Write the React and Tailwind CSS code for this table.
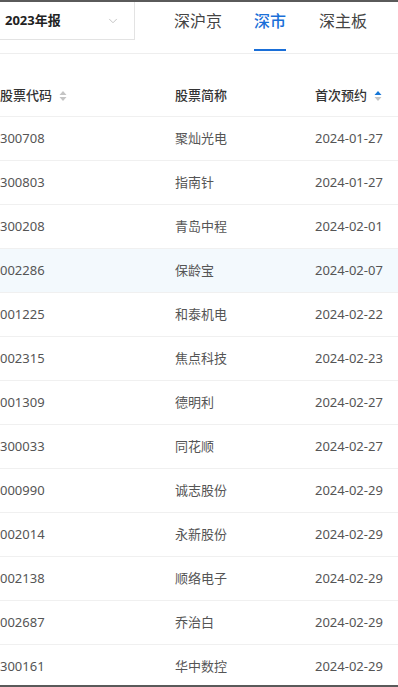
import { ChevronDown } from "lucide-react";

const rows = [
  ["300708", "聚灿光电", "2024-01-27"],
  ["300803", "指南针", "2024-01-27"],
  ["300208", "青岛中程", "2024-02-01"],
  ["002286", "保龄宝", "2024-02-07"],
  ["001225", "和泰机电", "2024-02-22"],
  ["002315", "焦点科技", "2024-02-23"],
  ["001309", "德明利", "2024-02-27"],
  ["300033", "同花顺", "2024-02-27"],
  ["000990", "诚志股份", "2024-02-29"],
  ["002014", "永新股份", "2024-02-29"],
  ["002138", "顺络电子", "2024-02-29"],
  ["002687", "乔治白", "2024-02-29"],
  ["300161", "华中数控", "2024-02-29"],
];

const SortIcon = ({ up }) => (
  <svg width="8" height="12" viewBox="0 0 8 12" className="ml-[7px]">
    <path d="M4 1 L7.5 5 H0.5 Z" fill={up ? "#1677d8" : "#c4c4c4"} />
    <path d="M4 11 L7.5 7 H0.5 Z" fill="#c4c4c4" />
  </svg>
);

const App = () => {
  return (
    <div
      className="w-[398px] h-[687px] overflow-hidden bg-white border-t-2 border-b-2 border-[#5a5a5a] flex flex-col"
      style={{ fontFamily: '"Noto Sans", "Noto Sans CJK SC", sans-serif' }}
    >
      <div className="shrink-0 flex items-start h-[52px] border-b border-[#eeeeee]">
        <div className="w-[135px] h-[38px] border-r border-b border-[#e3e3e3] flex items-center justify-between pl-[5px] pr-[14px]">
          <span className="text-[13px] font-bold text-[#222]">2023年报</span>
          <ChevronDown size={14} strokeWidth={1.5} className="text-[#bbbbbb]" />
        </div>
        <div className="flex h-full">
          <div className="ml-[39px] h-full flex flex-col items-center pt-[7px] text-[16px] text-[#444]">深沪京</div>
          <div className="ml-[32px] h-full flex flex-col items-center justify-between pt-[7px] text-[16px] text-[#1a6fd8] font-medium">
            <span>深市</span>
            <div className="w-[32px] h-[2px] bg-[#1a6fd8] mb-[2px]" />
          </div>
          <div className="ml-[33px] h-full flex flex-col items-center pt-[7px] text-[16px] text-[#444]">深主板</div>
        </div>
      </div>
      <div className="shrink-0 mt-[22px]">
        <div className="grid grid-cols-[175px_140px_1fr] h-[41px] items-center border-b border-[#f0f0f0] text-[13px] font-medium text-[#333]">
          <div className="flex items-center">股票代码<SortIcon /></div>
          <div>股票简称</div>
          <div className="flex items-center">首次预约<SortIcon up /></div>
        </div>
        {rows.map((r, i) => (
          <div
            key={r[0]}
            className={`grid grid-cols-[175px_140px_1fr] h-[44px] items-center border-b border-[#f0f0f0] text-[13px] text-[#555] ${
              i === 3 ? "bg-[#f3f9fd]" : ""
            }`}
          >
            <div>{r[0]}</div>
            <div>{r[1]}</div>
            <div>{r[2]}</div>
          </div>
        ))}
      </div>
    </div>
  );
};

export default App;
